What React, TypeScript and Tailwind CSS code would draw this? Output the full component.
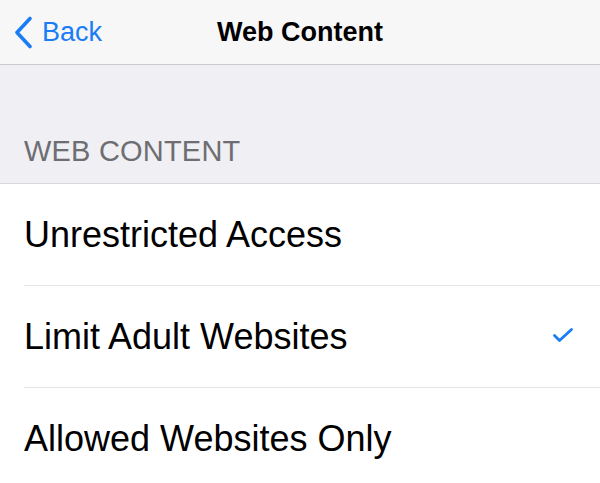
const rows = [
  { label: "Unrestricted Access", checked: false },
  { label: "Limit Adult Websites", checked: true },
  { label: "Allowed Websites Only", checked: false },
];

export default function App() {
  return (
    <div
      className="w-[600px] h-[483px] overflow-hidden bg-white"
      style={{ fontFamily: '"Liberation Sans", Arial, sans-serif' }}
    >
      <header className="relative flex items-center h-[65px] bg-[#f7f7f8] border-b border-[#c9c9ce]">
        <div className="flex items-center gap-[9px] pl-[14px] text-[#1a7df6]">
          <svg width="19" height="33" viewBox="0 0 19 33" fill="none" aria-hidden>
            <path d="M16 2.5L3 16.5l13 14" stroke="currentColor" strokeWidth="3.6" strokeLinecap="round" strokeLinejoin="round" />
          </svg>
          <span className="text-[27px] leading-none">Back</span>
        </div>
        <h1 className="absolute left-0 right-0 text-center text-[27px] font-bold leading-none text-black">
          Web Content
        </h1>
      </header>

      <div className="h-[119px] bg-[#efeff4] flex items-end px-6 pb-[17px] border-b border-[#d8d8dc]">
        <span className="text-[29px] leading-none text-[#6d6d72] tracking-[0.2px]">WEB CONTENT</span>
      </div>

      <ul>
        {rows.map((r, i) => (
          <li key={r.label} className="pl-6">
            <div
              className={`flex items-center justify-between h-[102px] pr-[26px] ${
                i < rows.length - 1 ? "border-b border-[#e4e4e6]" : ""
              }`}
            >
              <span className="text-[36px] leading-none text-black">{r.label}</span>
              {r.checked && (
                <svg width="22" height="16" viewBox="0 0 22 16" fill="none" aria-hidden className="mb-[3px]">
                  <path d="M2.5 8.5l5 5L19.5 2.5" stroke="#1a7df6" strokeWidth="2.8" strokeLinecap="round" strokeLinejoin="round" />
                </svg>
              )}
            </div>
          </li>
        ))}
      </ul>
    </div>
  );
}
